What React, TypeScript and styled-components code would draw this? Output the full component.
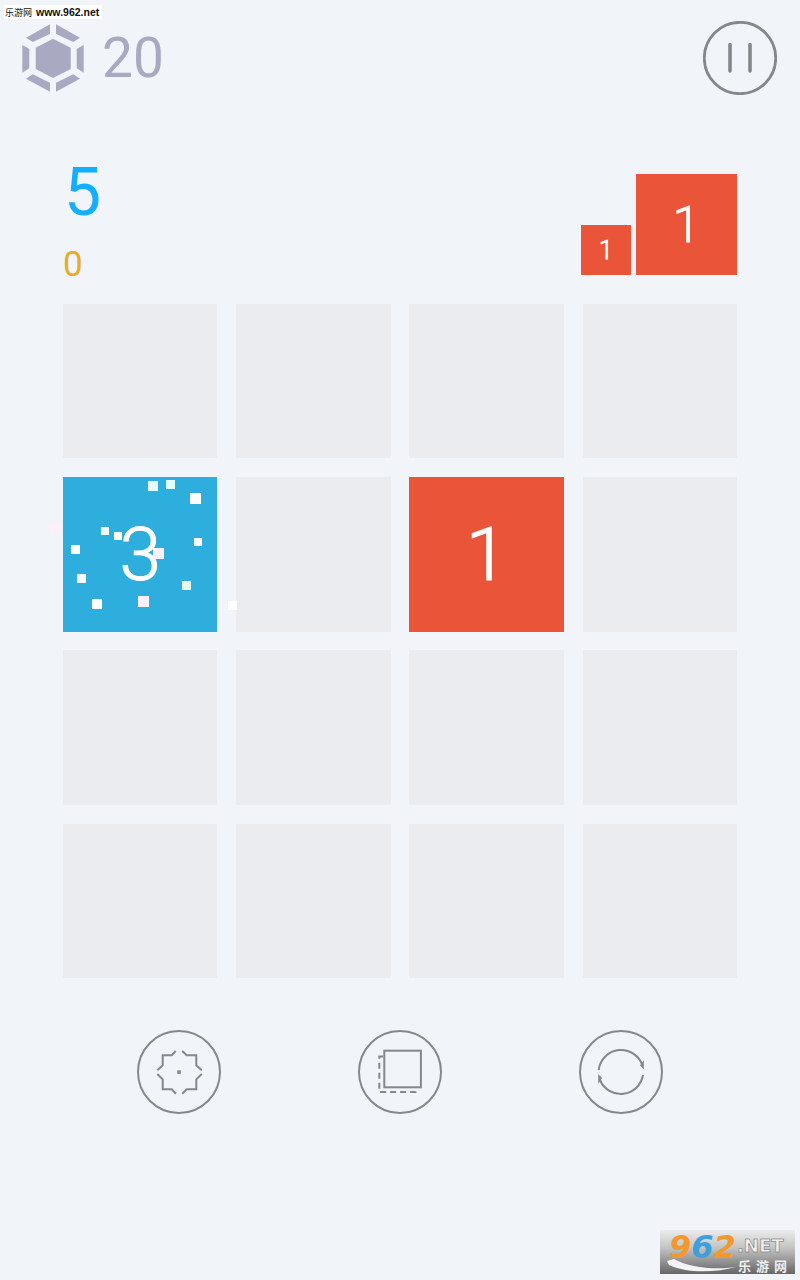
import React from "react";
import styled, { createGlobalStyle } from "styled-components";

const Global = createGlobalStyle`
  html, body { margin: 0; padding: 0; background: #f1f4f8; }
  body { font-family: Roboto, "Noto Sans", sans-serif; }
`;

const Page = styled.div`
  position: relative;
  width: 800px;
  height: 1280px;
  box-sizing: border-box;
  overflow: hidden;
  background: #f1f4f8;
  padding-top: 21px;
`;

const Header = styled.header`
  display: flex;
  align-items: center;
  justify-content: space-between;
  height: 74px;
  padding: 0 23px 0 22px;
`;

const Coins = styled.div`
  display: flex;
  align-items: center;
  gap: 18px;
`;

const CoinCount = styled.span`
  font-weight: 400;
  font-size: 55px;
  line-height: 74px;
  color: #a9aac2;
`;

const RoundIcon = styled.svg`
  display: block;
  flex: none;
`;

const ScoreRow = styled.section`
  display: flex;
  align-items: flex-end;
  justify-content: space-between;
  height: 101px;
  margin: 79px 63px 0;
`;

const Scores = styled.div`
  display: flex;
  flex-direction: column;
  align-self: stretch;
`;

const Score = styled.div`
  font-weight: 400;
  font-size: 66px;
  line-height: 68px;
  margin-top: -15px;
  margin-left: 1px;
  color: #13aeff;
`;

const Best = styled.div`
  font-weight: 400;
  font-size: 35px;
  line-height: 40px;
  margin-top: 18px;
  color: #e6ae1e;
`;

const NextTiles = styled.div`
  display: flex;
  align-items: flex-end;
  gap: 5px;
`;

const NextTile = styled.div<{ $size: number }>`
  display: flex;
  align-items: center;
  justify-content: center;
  width: ${(p) => p.$size}px;
  height: ${(p) => p.$size}px;
  background: #ea553a;
  color: #fff;
  font-weight: 300;
  -webkit-text-stroke: 0.8px #fff;
  font-size: ${(p) => p.$size / 2}px;
`;

const Board = styled.main`
  display: grid;
  grid-template-columns: repeat(4, 1fr);
  grid-template-rows: repeat(4, 1fr);
  gap: 18.7px;
  width: 674px;
  height: 674px;
  margin: 29px 63px 0;
`;

const Cell = styled.div<{ $color?: string }>`
  display: flex;
  align-items: center;
  justify-content: center;
  background: ${(p) => p.$color ?? "#ebecf0"};
  color: #fff;
  font-weight: 300;
  -webkit-text-stroke: 1px #fff;
  font-size: 75px;
`;

const Tools = styled.nav`
  display: flex;
  justify-content: center;
  gap: 137px;
  margin-top: 52px;
`;

const Fleck = styled.i`
  position: absolute;
  display: block;
`;

const TopMark = styled.div`
  position: absolute;
  left: 4px;
  top: 5px;
  width: 98px;
  height: 14px;
  padding-left: 1px;
  box-sizing: border-box;
  background: #fff;
  color: #111;
  font: 700 10.5px/14px "Liberation Sans", sans-serif;
  white-space: nowrap;
`;

const TopMarkName = styled.span`
  font: 400 9px/14px "Noto Sans CJK SC", sans-serif;
  margin-right: 4px;
`;

const Logo = styled.div`
  position: absolute;
  left: 660px;
  top: 1230px;
  width: 135px;
  height: 44px;
  background: linear-gradient(#ececec 0%, #c4c4c4 40%, #666 100%);
`;

const LogoNumber = styled.div`
  position: absolute;
  left: 9px;
  top: 3px;
  font: italic 700 32px/28px "DejaVu Sans", sans-serif;
  white-space: nowrap;
`;

const LogoDigit = styled.span<{ $color: string }>`
  color: ${(p) => p.$color};
`;

const LogoNet = styled.div`
  position: absolute;
  left: 77px;
  top: 6px;
  font: 700 18px/20px "DejaVu Sans", sans-serif;
  color: #eee;
  -webkit-text-stroke: 0.5px #666;
`;

const LogoName = styled.div`
  position: absolute;
  left: 78px;
  top: 29px;
  font: 700 13px/14px "Noto Sans CJK SC", sans-serif;
  letter-spacing: 5px;
  color: #eee;
  white-space: nowrap;
`;

const Swoosh = styled.svg`
  position: absolute;
  left: 0;
  top: 0;
`;

const gray = "#85888a";

const Hexagon = () => (
  <RoundIcon width={62} height={68} viewBox="22 24 62 68" fill="#a9aac2">
    <polygon points="53,38.7 70.7,47.7 70.7,69 53,78 35.7,69 35.7,47.7" />
    <polygon points="22.3,45 29.3,49 29.3,68.3 22.3,72.7" />
    <polygon points="83.7,45 76.7,49 76.7,68.3 83.7,72.7" />
    <polygon points="50,24.3 50,34 32.7,42 26,37.7" />
    <polygon points="56,24.3 56,34 73.3,42 80,37.7" />
    <polygon points="26,78.7 32.7,74.3 50,82.7 50,91.7" />
    <polygon points="80,78.7 73.3,74.3 56,82.7 56,91.7" />
  </RoundIcon>
);

const PauseIcon = () => (
  <RoundIcon width={74} height={74} viewBox="0 0 74 74" fill="none" stroke={gray}>
    <circle cx={37} cy={37} r={35.7} strokeWidth={2.8} />
    <path d="M27 23.5V50M47 23.5V50" strokeWidth={3.6} strokeLinecap="round" />
  </RoundIcon>
);

const ToolIcon = ({ children }: { children: React.ReactNode }) => (
  <RoundIcon width={84} height={84} viewBox="0 0 84 84" fill="none" stroke={gray} strokeWidth={2}>
    <circle cx={42} cy={42} r={41} />
    {children}
  </RoundIcon>
);

const BombIcon = () => (
  <ToolIcon>
    <path d="M38.7 21 34.7 25.3H25.7V35.3L20.3 40.3" />
    <path d="M45.3 21 49.7 25.3H59.3V35.3L64.7 40.3" />
    <path d="M20.3 44 25.7 49.3V59.3H34.7L39 63.7" />
    <path d="M64.7 44 59.3 49.3V59.3H49.7L45.3 63.7" />
    <rect x={40.2} y={40.3} width={3.6} height={3.6} fill={gray} stroke="none" />
  </ToolIcon>
);

const CopyIcon = () => (
  <ToolIcon>
    <rect x={26.3} y={20.7} width={36.6} height={36.6} />
    <path d="M25 26.5H21.3V62H57.5V58" strokeDasharray="6 4" />
  </ToolIcon>
);

const RefreshIcon = () => (
  <ToolIcon>
    <path d="M19.7 40A22.5 22.5 0 0 1 63.6 36" />
    <path d="M64 45A22.5 22.5 0 0 1 21 50" />
    <polygon points="64.8,30 64.8,39.5 61,35.6" fill={gray} stroke="none" />
    <polygon points="19.2,44 19.2,54 23,48" fill={gray} stroke="none" />
  </ToolIcon>
);

const flecks = [
  { x: 148, y: 481, s: 10, c: "#e6ffff" },
  { x: 166, y: 480, s: 9, c: "#e2ffff" },
  { x: 190, y: 493, s: 11, c: "#ffffff" },
  { x: 101, y: 527, s: 8, c: "#f4ffff" },
  { x: 114, y: 532, s: 8, c: "#fdfdea" },
  { x: 153, y: 548, s: 11, c: "#fdf0fd" },
  { x: 194, y: 538, s: 8, c: "#ffffff" },
  { x: 71, y: 545, s: 9, c: "#ffffff" },
  { x: 77, y: 574, s: 9, c: "#ffffff" },
  { x: 182, y: 581, s: 9, c: "#eaf7e8" },
  { x: 92, y: 599, s: 10, c: "#ffffff" },
  { x: 138, y: 596, s: 11, c: "#fdeffd" },
  { x: 228, y: 601, s: 9, c: "#ffffff" },
  { x: 50, y: 522, s: 11, c: "#fdf0fb" },
  { x: 148, y: 462, s: 9, c: "#eff6f6" },
];

const cells: { label?: string; color?: string }[] = Array.from({ length: 16 }, () => ({}));
cells[4] = { label: "3", color: "#2eaedc" };
cells[6] = { label: "1", color: "#ea553a" };

export default function App() {
  return (
    <Page>
      <Global />
      <Header>
        <Coins>
          <Hexagon />
          <CoinCount>20</CoinCount>
        </Coins>
        <PauseIcon />
      </Header>
      <ScoreRow>
        <Scores>
          <Score>5</Score>
          <Best>0</Best>
        </Scores>
        <NextTiles>
          <NextTile $size={50}>1</NextTile>
          <NextTile $size={101}>1</NextTile>
        </NextTiles>
      </ScoreRow>
      <Board>
        {cells.map((c, i) => (
          <Cell key={i} $color={c.color}>
            {c.label}
          </Cell>
        ))}
      </Board>
      <Tools>
        <BombIcon />
        <CopyIcon />
        <RefreshIcon />
      </Tools>
      {flecks.map((f, i) => (
        <Fleck key={i} style={{ left: f.x, top: f.y, width: f.s, height: f.s, background: f.c }} />
      ))}
      <TopMark>
        <TopMarkName>乐游网</TopMarkName>www.962.net
      </TopMark>
      <Logo>
        <LogoNumber>
          <LogoDigit $color="#f2992e">9</LogoDigit>
          <LogoDigit $color="#3f9fdc">6</LogoDigit>
          <LogoDigit $color="#f2992e">2</LogoDigit>
        </LogoNumber>
        <Swoosh width={135} height={44} viewBox="0 0 135 44">
          <path d="M7 31 14 29C30 38 55 40 76 37 55 43 25 43 9 35Z" fill="#f4f4f4" />
        </Swoosh>
        <LogoNet>.NET</LogoNet>
        <LogoName>乐游网</LogoName>
      </Logo>
    </Page>
  );
}
